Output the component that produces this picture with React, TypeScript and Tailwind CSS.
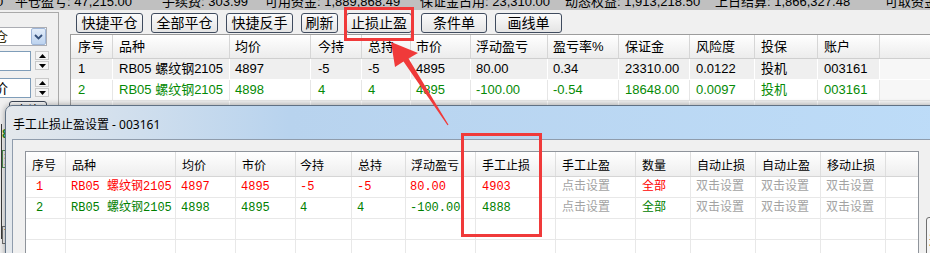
import React from 'react';

const topCols = [
  { t: '序号', w: 'w-[42px]', p: 'pl-[7px]' },
  { t: '品种', w: 'w-[117px]', p: 'pl-[6px]' },
  { t: '均价', w: 'w-[81px]', p: 'pl-[5px]' },
  { t: '今持', w: 'w-[51px]', p: 'pl-[7px]' },
  { t: '总持', w: 'w-[49px]', p: 'pl-[6px]' },
  { t: '市价', w: 'w-[60px]', p: 'pl-[5px]' },
  { t: '浮动盈亏', w: 'w-[77px]', p: 'pl-[5px]' },
  { t: '盈亏率%', w: 'w-[71px]', p: 'pl-[5px]' },
  { t: '保证金', w: 'w-[71px]', p: 'pl-[6px]' },
  { t: '风险度', w: 'w-[65px]', p: 'pl-[6px]' },
  { t: '投保', w: 'w-[63px]', p: 'pl-[6px]' },
  { t: '账户', w: 'w-[62px]', p: 'pl-[6px]' },
];

const topRows = [
  { c: 'text-black', bg: 'bg-[#efefef]', sep: 'border-white', d: ['1', 'RB05 螺纹钢2105', '4897', '-5', '-5', '4895', '80.00', '0.34', '23310.00', '0.0122', '投机', '003161'] },
  { c: 'text-[#058a05]', bg: 'bg-white', sep: 'border-[#e6e6e6]', d: ['2', 'RB05 螺纹钢2105', '4898', '4', '4', '4895', '-100.00', '-0.54', '18648.00', '0.0097', '投机', '003161'] },
  { c: 'text-black', bg: 'bg-[#efefef]', sep: 'border-white', d: ['', '', '', '', '', '', '', '', '', '', '', ''] },
];

const dlgCols = [
  { t: '序号', w: 'w-[40px]', hp: 'pl-[6px]', dp: 'pl-[10px]' },
  { t: '品种', w: 'w-[110px]', hp: 'pl-[6px]', dp: 'pl-[5px]' },
  { t: '均价', w: 'w-[60px]', hp: 'pl-[6px]', dp: 'pl-[5px]' },
  { t: '市价', w: 'w-[60px]', hp: 'pl-[6px]', dp: 'pl-[5px]' },
  { t: '今持', w: 'w-[56px]', hp: 'pl-[4px]', dp: 'pl-[4px]' },
  { t: '总持', w: 'w-[54px]', hp: 'pl-[6px]', dp: 'pl-[5px]' },
  { t: '浮动盈亏', w: 'w-[70px]', hp: 'pl-[5px]', dp: 'pl-[4px]' },
  { t: '手工止损', w: 'w-[80px]', hp: 'pl-[6px]', dp: 'pl-[6px]' },
  { t: '手工止盈', w: 'w-[80px]', hp: 'pl-[6px]', dp: 'pl-[6px]' },
  { t: '数量', w: 'w-[55px]', hp: 'pl-[6px]', dp: 'pl-[6px]' },
  { t: '自动止损', w: 'w-[65px]', hp: 'pl-[6px]', dp: 'pl-[5px]' },
  { t: '自动止盈', w: 'w-[65px]', hp: 'pl-[6px]', dp: 'pl-[5px]' },
  { t: '移动止损', w: 'w-[65px]', hp: 'pl-[6px]', dp: 'pl-[5px]' },
];

const G = 'text-[#a3a3a3]';
const dlgRows = [
  { c: 'text-[#ff0000]', d: ['1', 'RB05 螺纹钢2105', '4897', '4895', '-5', '-5', '80.00', '4903', '点击设置', '全部', '双击设置', '双击设置', '双击设置'] },
  { c: 'text-[#008000]', d: ['2', 'RB05 螺纹钢2105', '4898', '4895', '4', '4', '-100.00', '4888', '点击设置', '全部', '双击设置', '双击设置', '双击设置'] },
  { c: '', d: ['', '', '', '', '', '', '', '', '', '', '', '', ''] },
  { c: '', d: ['', '', '', '', '', '', '', '', '', '', '', '', ''] },
];

function TopBar() {
  return (
    <div className="h-[10px] bg-[#c0c0c0] overflow-hidden whitespace-nowrap text-[13px] leading-[14px]">
      <div className="flex -mt-[5px]">
        <span className="-ml-[4px] w-[19px] shrink-0">0</span>
        <span className="w-[147px] shrink-0">平仓盈亏: 47,215.00</span>
        <span className="w-[103px] shrink-0">手续费: 303.99</span>
        <span className="w-[155px] shrink-0">可用资金: 1,889,868.49</span>
        <span className="w-[145px] shrink-0">保证金占用: 23,310.00</span>
        <span className="w-[150px] shrink-0">动态权益: 1,913,218.50</span>
        <span className="w-[170px] shrink-0">上日结算: 1,866,327.48</span>
        <span className="shrink-0">可取资金: 1,866,327.48</span>
      </div>
    </div>
  );
}

function Spin() {
  return (
    <div className="ml-[4px] w-[14px] h-[20px] flex flex-col gap-[1px]">
      <div className="h-[9px] border border-[#c9c9c9] bg-[#f4f4f4] flex items-center justify-center">
        <svg width="7" height="4" viewBox="0 0 7 4"><path d="M0 4 L3.5 0 L7 4 Z" fill="#000" /></svg>
      </div>
      <div className="h-[9px] border border-[#c9c9c9] bg-[#f4f4f4] flex items-center justify-center">
        <svg width="7" height="4" viewBox="0 0 7 4"><path d="M0 0 L3.5 4 L7 0 Z" fill="#000" /></svg>
      </div>
    </div>
  );
}

function LeftPanel() {
  return (
    <div className="w-[59px] shrink-0 h-[243px] mt-[2px] border-t border-r border-[#a9a9a9] flex flex-col">
      <div className="mt-[14px] -ml-[1px] w-[48px] h-[19px] border border-[#abadb3] bg-white flex items-center overflow-hidden">
        <span className="-ml-[6px] text-[14px] leading-none text-[#3a3316]">仓</span>
        <div className="ml-auto w-[15px] h-[17px] border border-[#9fb6d8] rounded-[2px] bg-linear-to-b from-[#e3edf9] to-[#bdd3ef] flex items-center justify-center">
          <svg width="9" height="6" viewBox="0 0 9 6"><path d="M1 1 L4.5 4.5 L8 1" stroke="#35507a" strokeWidth="1.8" fill="none" /></svg>
        </div>
      </div>
      <div className="mt-[5px] flex">
        <div className="-ml-[1px] w-[32px] h-[20px] border border-[#7f9db9] bg-white" />
        <Spin />
      </div>
      <div className="mt-[7px] flex">
        <div className="-ml-[1px] w-[32px] h-[20px] border border-[#7f9db9] bg-white overflow-hidden flex items-center">
          <span className="-ml-[6px] text-[14px] leading-none">价</span>
        </div>
        <Spin />
      </div>
      <div className="mt-[3px] ml-[9px] w-[38px] h-[20px] border border-[#3c4656] rounded-[3px] bg-linear-to-b from-[#fafafa] to-[#e2e2e2] text-[13px] leading-[18px] text-center">查询</div>
      <div className="mt-[3px] ml-[1px] border-l border-[#3a3a3a] h-[115px] flex flex-col">
        <span className="mt-[3px] text-[13px] leading-[14px] font-bold text-[#1f8a1f]">8</span>
        <div className="mt-[9px] w-[20px] h-[18px] border border-[#4f8f4f] text-[13px] leading-[16px] text-[#2a7a2a] pl-[1px]">查</div>
        <div className="mt-[58px] w-[20px] h-[18px] border border-[#707070] text-[13px] leading-[16px] pl-[1px]">下</div>
      </div>
    </div>
  );
}

function Btn({ w, children }: { w: string; children: React.ReactNode }) {
  return (
    <div className={`${w} h-[20px] shrink-0 border border-[#3f4b5e] rounded-[3px] bg-linear-to-b from-[#fbfbfb] to-[#e4e4e4] text-[14px] leading-[18px] text-center`}>
      {children}
    </div>
  );
}

function Toolbar() {
  return (
    <div className="mt-[3px] h-[20px] flex gap-[8px] pl-[6px]">
      <Btn w="w-[67px]">快捷平仓</Btn>
      <Btn w="w-[67px]">全部平仓</Btn>
      <Btn w="w-[67px]">快捷反手</Btn>
      <Btn w="w-[37px]">刷新</Btn>
      <Btn w="w-[66px]">止损止盈</Btn>
      <div className="ml-[1px]"><Btn w="w-[66px]">条件单</Btn></div>
      <Btn w="w-[67px]">画线单</Btn>
    </div>
  );
}

function TopGrid() {
  return (
    <div className="mt-[1px] border-t border-l border-[#9c9c9c] text-[13px]">
      <div className="h-[24px] flex border-b border-[#cfcfcf] bg-linear-to-b from-white to-[#ececec]">
        {topCols.map((c, i) => (
          <div key={i} className={`${c.w} ${c.p} shrink-0 flex items-center border-r border-[#d6d6d6]`}>{c.t}</div>
        ))}
        <div className="flex-1" />
      </div>
      {topRows.map((r, ri) => (
        <div key={ri} className={`h-[21px] flex border-b ${r.sep} ${r.bg} ${r.c}`}>
          {topCols.map((c, i) => (
            <div key={i} className={`${c.w} ${c.p} shrink-0 flex items-center whitespace-nowrap border-r ${r.sep}`}>{r.d[i]}</div>
          ))}
          <div className="flex-1 bg-[#f7f7f7]" />
        </div>
      ))}
    </div>
  );
}

function DialogGrid() {
  return (
    <div className="w-[894px] shrink-0 border border-[#8f949b] bg-white">
      <div className="h-[25px] flex border-b border-[#d5d5d5] bg-linear-to-b from-white to-[#eeeeee] text-[12px] font-['Noto_Sans_CJK_SC',sans-serif]">
        {dlgCols.map((c, i) => (
          <div key={i} className={`${c.w} ${c.hp} shrink-0 flex items-center pt-[2px] border-r border-[#dedede]`}>{c.t}</div>
        ))}
        <div className="flex-1" />
      </div>
      {dlgRows.map((r, ri) => (
        <div key={ri} className={`h-[21px] flex border-b border-[#e8e8e8] text-[12px] font-['Liberation_Mono','Noto_Sans_CJK_SC',monospace] ${r.c}`}>
          {dlgCols.map((c, i) => {
            const v = r.d[i];
            const grey = v === '点击设置' || v === '双击设置';
            return (
              <div key={i} className={`${c.w} ${c.dp} shrink-0 flex items-center whitespace-nowrap border-r border-[#e8e8e8] ${grey ? G : ''}`}>{v}</div>
            );
          })}
          <div className="flex-1" />
        </div>
      ))}
    </div>
  );
}

function Dialog() {
  return (
    <div className="absolute left-[5px] top-[105px] w-[945px] h-[170px] rounded-t-[7px] border border-[#607184] bg-linear-to-r from-[#e4e8ec] via-[#b8d3ee] via-30% to-[#bddcf8] shadow-[0_0_6px_rgba(0,0,0,0.35)] overflow-hidden">
      <div className="h-[33px] flex items-center pl-[7px] pt-[4px] text-[12px] font-['Noto_Sans','Noto_Sans_CJK_SC',sans-serif]">手工止损止盈设置 - 003161</div>
      <div className="ml-[6px] h-[140px] border-t border-l border-[#8f9cac] bg-[#f0f0f0] pl-[12px] pt-[11px]">
        <div className="flex">
          <DialogGrid />
          <div className="ml-[7px] mt-[66px] w-[24px] h-[40px] shrink-0 border border-[#6f6f6f] rounded-[3px] bg-[#f6f6f6] text-[12px] pl-[2px] pt-[13px] font-['Noto_Sans_CJK_SC',sans-serif]">选</div>
        </div>
      </div>
    </div>
  );
}

function Annotations() {
  return (
    <svg className="absolute left-0 top-0 pointer-events-none" width="930" height="253" viewBox="0 0 930 253">
      <rect x="345.5" y="8.5" width="67" height="31" fill="none" stroke="#f03a3a" strokeWidth="3" />
      <rect x="462.5" y="134.5" width="78" height="101" fill="none" stroke="#f03a3a" strokeWidth="3" />
      <polygon
        points="391,42 418,53 408.5,58.4 448.5,124.7 447.5,125.3 403.5,61.6 395,67"
        fill="#f03a3a"
      />
    </svg>
  );
}

export default function App() {
  return (
    <div className="relative w-[930px] h-[253px] overflow-hidden bg-[#f0f0f0] font-['Liberation_Sans','Noto_Sans_CJK_SC',sans-serif] text-black">
      <TopBar />
      <div className="flex">
        <LeftPanel />
        <div className="ml-[11px] flex-1 min-w-0 flex flex-col">
          <Toolbar />
          <TopGrid />
        </div>
      </div>
      <Dialog />
      <Annotations />
    </div>
  );
}
